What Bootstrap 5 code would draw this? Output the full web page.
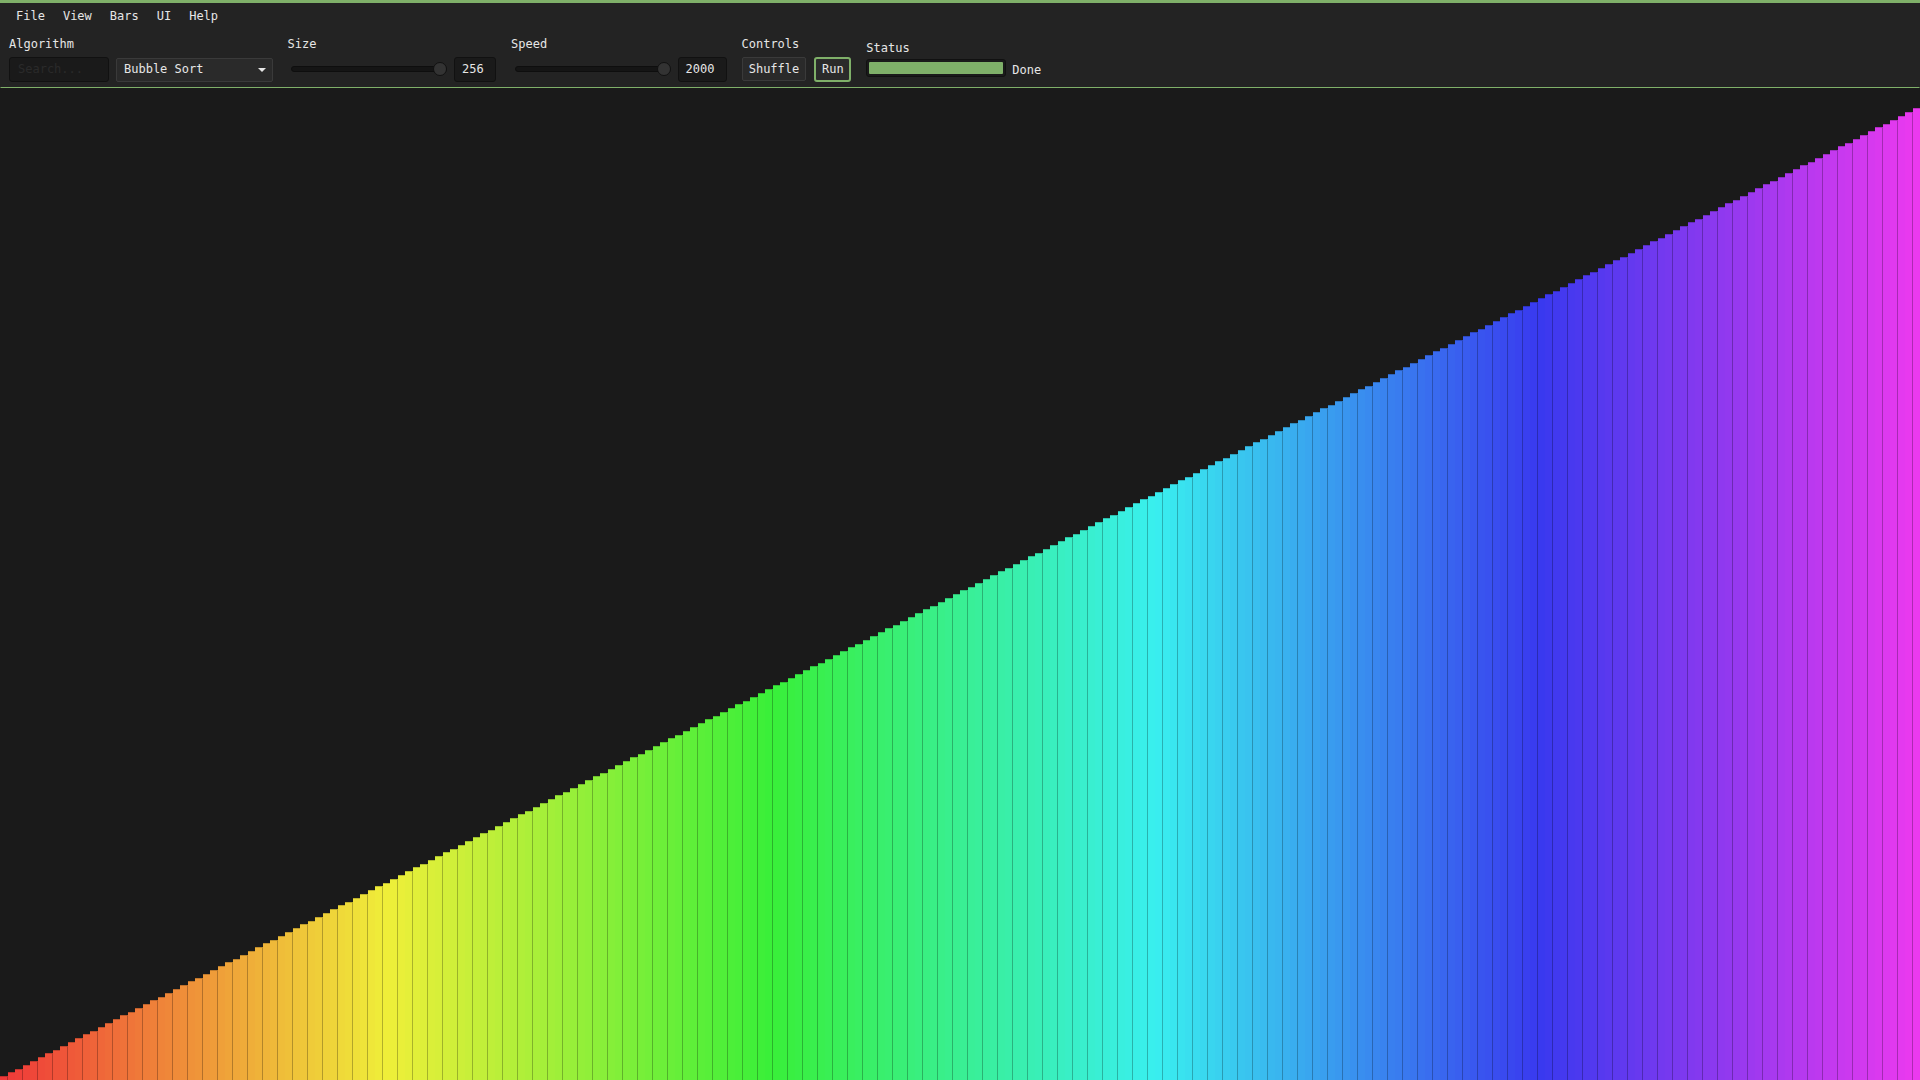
<!doctype html>
<html lang="en">
<head>
<meta charset="utf-8">
<title>Sorting Visualizer</title>
<link href="https://cdn.jsdelivr.net/npm/bootstrap@5.3.0/dist/css/bootstrap.min.css" rel="stylesheet">
<style>
html,body{height:100%;}
body{background:#1a1a1a;color:#e6e6e6;font-family:"DejaVu Sans Mono",monospace;font-size:12px;overflow:hidden;line-height:1.2;}
.app-shell{height:1080px;border-top:3px solid #7fb069;}
.app-head{height:85px;background:#232323;border-bottom:1px solid #7fb069;border-left:1px solid #232323;border-right:1px solid #232323;flex:none;}
.menu-row{height:27px;padding:4px 0 0 6px;}
.menu-row a{color:#e6e6e6;text-decoration:none;padding:2px 9px;line-height:15px;}
.tool-row{padding:0 0 0 8px;gap:15px;margin-top:7px;}
.tool-label{line-height:14px;height:14px;margin-bottom:6px;white-space:nowrap;}
.tool-line{height:25px;gap:7px;}
.ctrl-line{gap:8px;}
.field{background:#1a1a1a;border:1px solid #111;border-radius:3px;color:#e6e6e6;font:inherit;height:25px;}
.field::placeholder{color:#2a2a2a;opacity:1;}
.search-field{width:100px;padding:0 8px;outline:none;margin-top:-1px;}
.num-field{display:flex;align-items:center;padding-left:7px;width:42px;}
.num-wide{width:49px;}
.sel-field{width:156.5px;height:24px;background:#2a2a2a;border:1px solid #3a3a3a;border-radius:2px;padding:0 6px 0 7px;}
.sel-caret{width:0;height:0;border-left:4px solid transparent;border-right:4px solid transparent;border-top:4px solid #e6e6e6;}
.slider-pad{width:156px;margin-left:3.5px;margin-bottom:1px;}
.slider-track{height:6px;background:#151515;border:1px solid #0e0e0e;border-radius:3px;position:relative;}
.slider-knob{position:absolute;right:-1px;top:-5px;width:14px;height:14px;border-radius:50%;background:#333;border:1px solid #111;}
.tool-btn{background:#2a2a2a;border:1px solid #3a3a3a;border-radius:2px;color:#e6e6e6;font:inherit;padding:0 6.2px;height:24px;line-height:20px;margin-bottom:1px;}
.tool-btn.run-btn{border:2px solid #7fb069;border-radius:3px;height:25px;padding:0 5.6px;}
.status-wrap{margin-top:4px;}
.status-wrap .tool-label{margin-bottom:4px;}
.status-line{gap:6px;}
.bar-shell{width:140px;height:18px;background:#1a1a1a;border:1px solid #111;border-radius:3px;padding:2px;}
.bar-fill{height:100%;background:#7fb069;border-radius:1px;}
.done-text{margin-top:4px;}
.bar-stage{flex:1;min-height:0;}
.sort-bar{flex:1 1 0;min-width:0;border-top:1px solid rgba(0,0,0,.2);}
.sort-bar:nth-child(odd){border-right:1px solid rgba(0,0,0,.25);}
</style>
</head>
<body>
<div class="app-shell d-flex flex-column">
  <header class="app-head">
    <nav class="menu-row d-flex">
      <a href="#">File</a><a href="#">View</a><a href="#">Bars</a><a href="#">UI</a><a href="#">Help</a>
    </nav>
    <div class="tool-row d-flex align-items-start">
      <div>
        <div class="tool-label">Algorithm</div>
        <div class="tool-line d-flex align-items-center">
          <input class="field search-field" placeholder="Search..." aria-label="Search">
          <div class="sel-field d-flex align-items-center justify-content-between"><span>Bubble Sort</span><span class="sel-caret"></span></div>
        </div>
      </div>
      <div>
        <div class="tool-label">Size</div>
        <div class="tool-line d-flex align-items-center">
          <div class="slider-pad"><div class="slider-track"><div class="slider-knob"></div></div></div>
          <div class="field num-field">256</div>
        </div>
      </div>
      <div>
        <div class="tool-label">Speed</div>
        <div class="tool-line d-flex align-items-center">
          <div class="slider-pad"><div class="slider-track"><div class="slider-knob"></div></div></div>
          <div class="field num-field num-wide">2000</div>
        </div>
      </div>
      <div>
        <div class="tool-label">Controls</div>
        <div class="tool-line ctrl-line d-flex align-items-center">
          <button class="tool-btn" type="button">Shuffle</button>
          <button class="tool-btn run-btn" type="button">Run</button>
        </div>
      </div>
      <div class="status-wrap">
        <div class="tool-label">Status</div>
        <div class="status-line d-flex align-items-center">
          <div class="bar-shell"><div class="bar-fill"></div></div>
          <span class="done-text">Done</span>
        </div>
      </div>
    </div>
  </header>
  <main class="bar-stage d-flex align-items-end" id="stage"></main>
</div>
<script>
var stage=document.getElementById('stage');
for(var i=0;i<256;i++){
  var d=document.createElement('div');
  d.className='sort-bar';
  d.style.height=((i+1)*3.795).toFixed(2)+'px';
  d.style.background='hsl('+(i/256*300).toFixed(1)+',85%,58%)';
  stage.appendChild(d);
}
</script>
<script src="https://cdn.jsdelivr.net/npm/bootstrap@5.3.0/dist/js/bootstrap.bundle.min.js"></script>
</body>
</html>
